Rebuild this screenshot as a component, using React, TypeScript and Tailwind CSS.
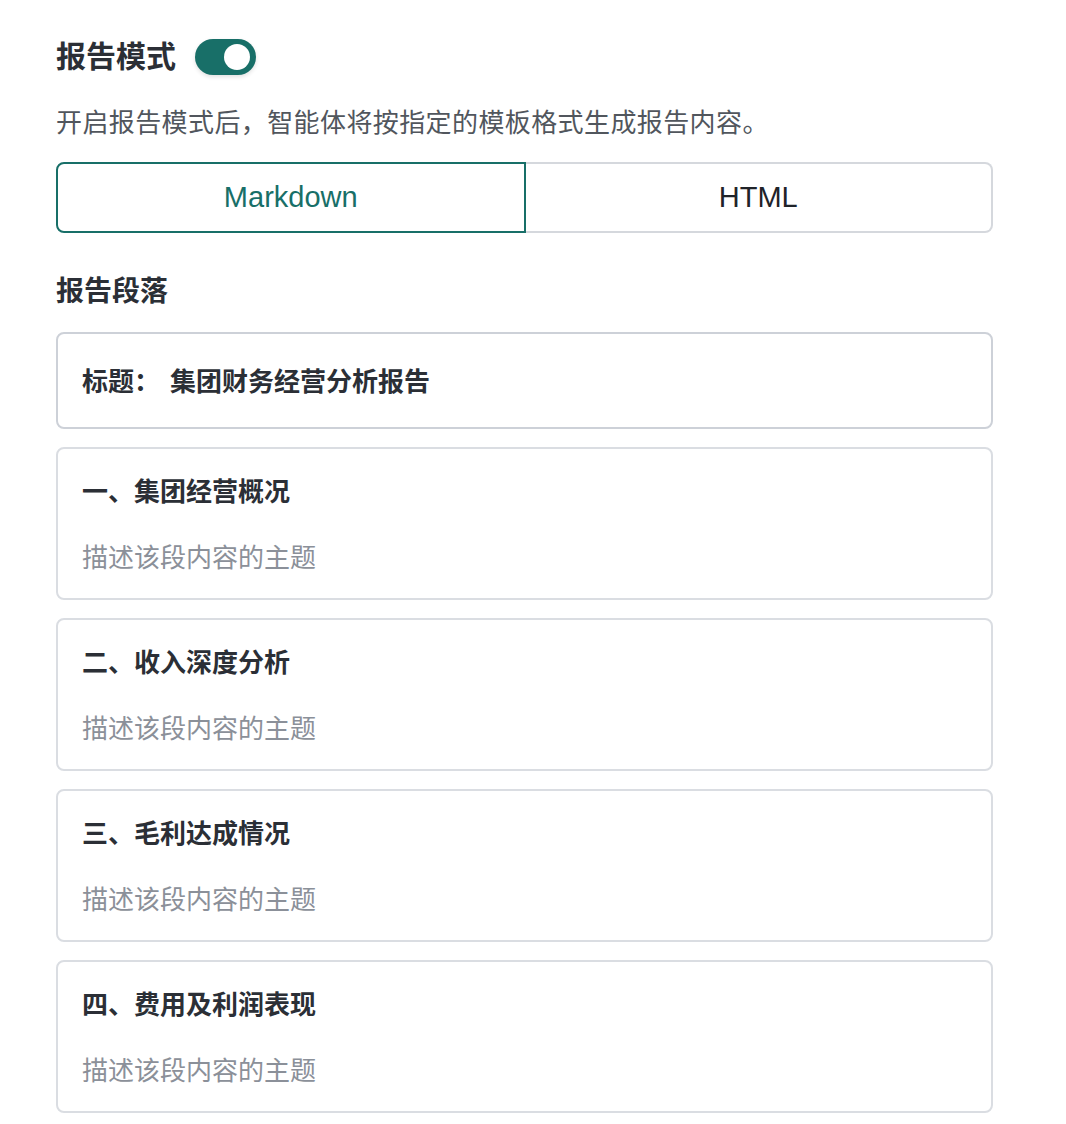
import React, { useState } from 'react';

const sections = [
  '一、集团经营概况',
  '二、收入深度分析',
  '三、毛利达成情况',
  '四、费用及利润表现',
];

export default function App() {
  const [enabled, setEnabled] = useState(true);
  const [format, setFormat] = useState<'markdown' | 'html'>('markdown');

  return (
    <div
      className="min-h-screen bg-white pl-[56px] pt-[39px] pb-[10px] text-[#1f2329]"
      style={{ fontFamily: '"Liberation Sans", "Noto Sans CJK SC", sans-serif' }}
    >
      <div className="w-[937px]">
        {/* Header with switch */}
        <div className="flex items-center h-[36px] gap-[19px]">
          <h1 className="text-[30px] leading-[36px] font-bold text-[#2b2f36]">报告模式</h1>
          <button
            type="button"
            onClick={() => setEnabled(!enabled)}
            className={`relative w-[61px] h-[36px] rounded-full shadow-[0_2px_4px_rgba(0,0,0,0.12)] ${
              enabled ? 'bg-[#186f68]' : 'bg-[#d1d5db]'
            }`}
          >
            <span
              className={`absolute top-[5px] w-[26px] h-[26px] rounded-full bg-white ${
                enabled ? 'right-[6px]' : 'left-[6px]'
              }`}
            />
          </button>
        </div>

        <p className="mt-[30px] text-[26px] leading-[36px] tracking-[0.4px] text-[#51565d]">
          开启报告模式后，智能体将按指定的模板格式生成报告内容。
        </p>

        {/* Format tabs */}
        <div className="mt-[21px] flex h-[71px]">
          <button
            type="button"
            onClick={() => setFormat('markdown')}
            className={`flex-1 rounded-l-lg border-2 text-[29px] ${
              format === 'markdown'
                ? 'border-[#186f68] text-[#186f68]'
                : 'border-[#d5d8dd] border-r-0 text-[#1f2329]'
            }`}
          >
            Markdown
          </button>
          <button
            type="button"
            onClick={() => setFormat('html')}
            className={`flex-1 rounded-r-lg border-2 text-[29px] ${
              format === 'html'
                ? 'border-[#186f68] text-[#186f68]'
                : 'border-[#d5d8dd] border-l-0 text-[#1f2329]'
            }`}
          >
            HTML
          </button>
        </div>

        <h2 className="mt-[41px] text-[28px] leading-[36px] font-bold text-[#2b2f36]">报告段落</h2>

        {/* Title card */}
        <div className="mt-[22px] h-[97px] flex items-center rounded-lg border-2 border-[#cdd1d8] px-[24px] pt-[4px]">
          <span className="text-[26px] font-bold text-[#2b2f36]">标题：</span>
          <span className="ml-[10px] text-[26px] font-bold text-[#2b2f36]">集团财务经营分析报告</span>
        </div>

        {/* Section cards */}
        <div className="mt-[18px] flex flex-col gap-[18px]">
          {sections.map((s) => (
            <div key={s} className="h-[153px] rounded-lg border-2 border-[#dadde2] px-[24px] pt-[25px]">
              <div className="text-[26px] leading-[36px] font-bold text-[#2b2f36]">{s}</div>
              <div className="mt-[30px] text-[26px] leading-[36px] text-[#8b9099]">描述该段内容的主题</div>
            </div>
          ))}
        </div>
      </div>
    </div>
  );
}
